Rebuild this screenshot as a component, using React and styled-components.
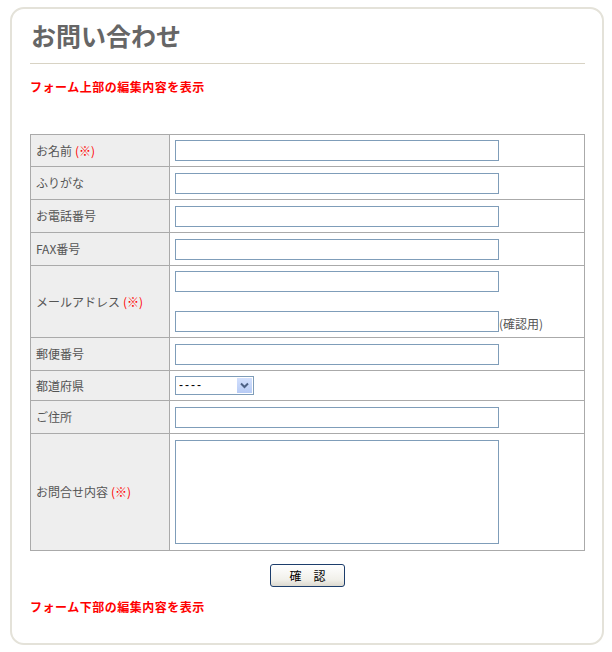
import styled, { createGlobalStyle } from "styled-components";

const GlobalStyle = createGlobalStyle`
  body {
    margin: 0;
    background: #fff;
    font-family: "Noto Sans CJK JP", "Liberation Sans", sans-serif;
    color: #555;
  }
`;

const Page = styled.div`
  padding: 7px 0 0 10px;
`;

const Panel = styled.div`
  box-sizing: border-box;
  width: 594px;
  height: 638px;
  border: 2px solid #e4e2d9;
  border-radius: 14px;
  padding: 11px 17px 0 18px;
`;

const Title = styled.h1`
  margin: 0;
  padding: 0 0 13px 1px;
  font-size: 25px;
  line-height: 30px;
  font-weight: bold;
  color: #666;
  border-bottom: 1px solid #d8d3c4;
`;

const Notice = styled.p`
  margin: ${(p) => p.$top}px 0 0;
  font-size: 12px;
  line-height: 16px;
  font-weight: bold;
  letter-spacing: 0.5px;
  color: #f00;
`;

const FormTable = styled.table`
  margin-top: 39px;
  width: 555px;
  border-collapse: collapse;
  font-size: 12px;
  line-height: 16px;
`;

const Label = styled.th`
  width: 128px;
  padding: 0 5px;
  height: ${(p) => p.$h}px;
  background: #eeeeee;
  border: 1px solid #aaa;
  text-align: left;
  font-weight: normal;
  color: #555;
`;

const Cell = styled.td`
  padding: 5px;
  border: 1px solid #aaa;
  vertical-align: middle;
`;

const Req = styled.span`
  color: #f00;
  margin-left: 3px;
`;

const TextInput = styled.input`
  box-sizing: border-box;
  display: block;
  width: 324px;
  height: 21px;
  border: 1px solid #7f9db9;
  padding: 0 3px;
  margin: 0;
`;

const Stack = styled.div`
  display: flex;
  flex-direction: column;
  gap: 19px;
`;

const Inline = styled.div`
  display: flex;
  align-items: flex-end;
  color: #555;
`;

const SelectBox = styled.div`
  box-sizing: border-box;
  display: flex;
  align-items: center;
  width: 79px;
  height: 19px;
  border: 1px solid #7f9db9;
  padding: 1px;
  background: #fff;
`;

const Select = styled.select`
  appearance: none;
  flex: 1;
  min-width: 0;
  border: 0;
  padding: 0 2px;
  height: 15px;
  font-size: 12px;
  line-height: 15px;
  letter-spacing: 2px;
  background: transparent;
  color: #000;
  font-family: "Liberation Sans", sans-serif;
  outline: none;
`;

const Arrow = styled.span`
  display: flex;
  align-items: center;
  justify-content: center;
  width: 15px;
  height: 15px;
  background: linear-gradient(#d3e0fd, #b7cbf5);
`;

const TextArea = styled.textarea`
  box-sizing: border-box;
  display: block;
  width: 324px;
  height: 104px;
  border: 1px solid #7f9db9;
  margin: 0;
  resize: none;
`;

const Actions = styled.div`
  display: flex;
  justify-content: center;
  margin-top: 13px;
`;

const Button = styled.button`
  box-sizing: border-box;
  width: 75px;
  height: 23px;
  border: 1px solid #1c3d6b;
  border-radius: 3px;
  background: linear-gradient(#ffffff, #f1f0ea 70%, #dcd9cf);
  font-family: "Noto Sans CJK JP", sans-serif;
  font-size: 12px;
  color: #000;
  letter-spacing: 12px;
  padding: 0 0 0 12px;
`;

const rows = [
  { label: "お名前", req: true, h: 31 },
  { label: "ふりがな", h: 32 },
  { label: "お電話番号", h: 32 },
  { label: "FAX番号", h: 32 },
];

export default function App() {
  return (
    <Page>
      <GlobalStyle />
      <Panel>
        <Title>お問い合わせ</Title>
        <Notice $top={15}>フォーム上部の編集内容を表示</Notice>
        <FormTable>
          <tbody>
            {rows.map((r) => (
              <tr key={r.label}>
                <Label $h={r.h}>
                  {r.label}
                  {r.req && <Req>(※)</Req>}
                </Label>
                <Cell>
                  <TextInput type="text" />
                </Cell>
              </tr>
            ))}
            <tr>
              <Label $h={71}>
                メールアドレス<Req>(※)</Req>
              </Label>
              <Cell>
                <Stack>
                  <TextInput type="text" />
                  <Inline>
                    <TextInput type="text" />
                    (確認用)
                  </Inline>
                </Stack>
              </Cell>
            </tr>
            <tr>
              <Label $h={32}>郵便番号</Label>
              <Cell>
                <TextInput type="text" />
              </Cell>
            </tr>
            <tr>
              <Label $h={29}>都道府県</Label>
              <Cell>
                <SelectBox>
                  <Select defaultValue="">
                    <option value="">----</option>
                  </Select>
                  <Arrow>
                    <svg width="9" height="7" viewBox="0 0 9 7">
                      <path d="M1 1.5 L4.5 5 L8 1.5" fill="none" stroke="#4d6185" strokeWidth="2" />
                    </svg>
                  </Arrow>
                </SelectBox>
              </Cell>
            </tr>
            <tr>
              <Label $h={32}>ご住所</Label>
              <Cell>
                <TextInput type="text" />
              </Cell>
            </tr>
            <tr>
              <Label $h={116}>
                お問合せ内容<Req>(※)</Req>
              </Label>
              <Cell>
                <TextArea />
              </Cell>
            </tr>
          </tbody>
        </FormTable>
        <Actions>
          <Button type="button">確認</Button>
        </Actions>
        <Notice $top={12}>フォーム下部の編集内容を表示</Notice>
      </Panel>
    </Page>
  );
}
